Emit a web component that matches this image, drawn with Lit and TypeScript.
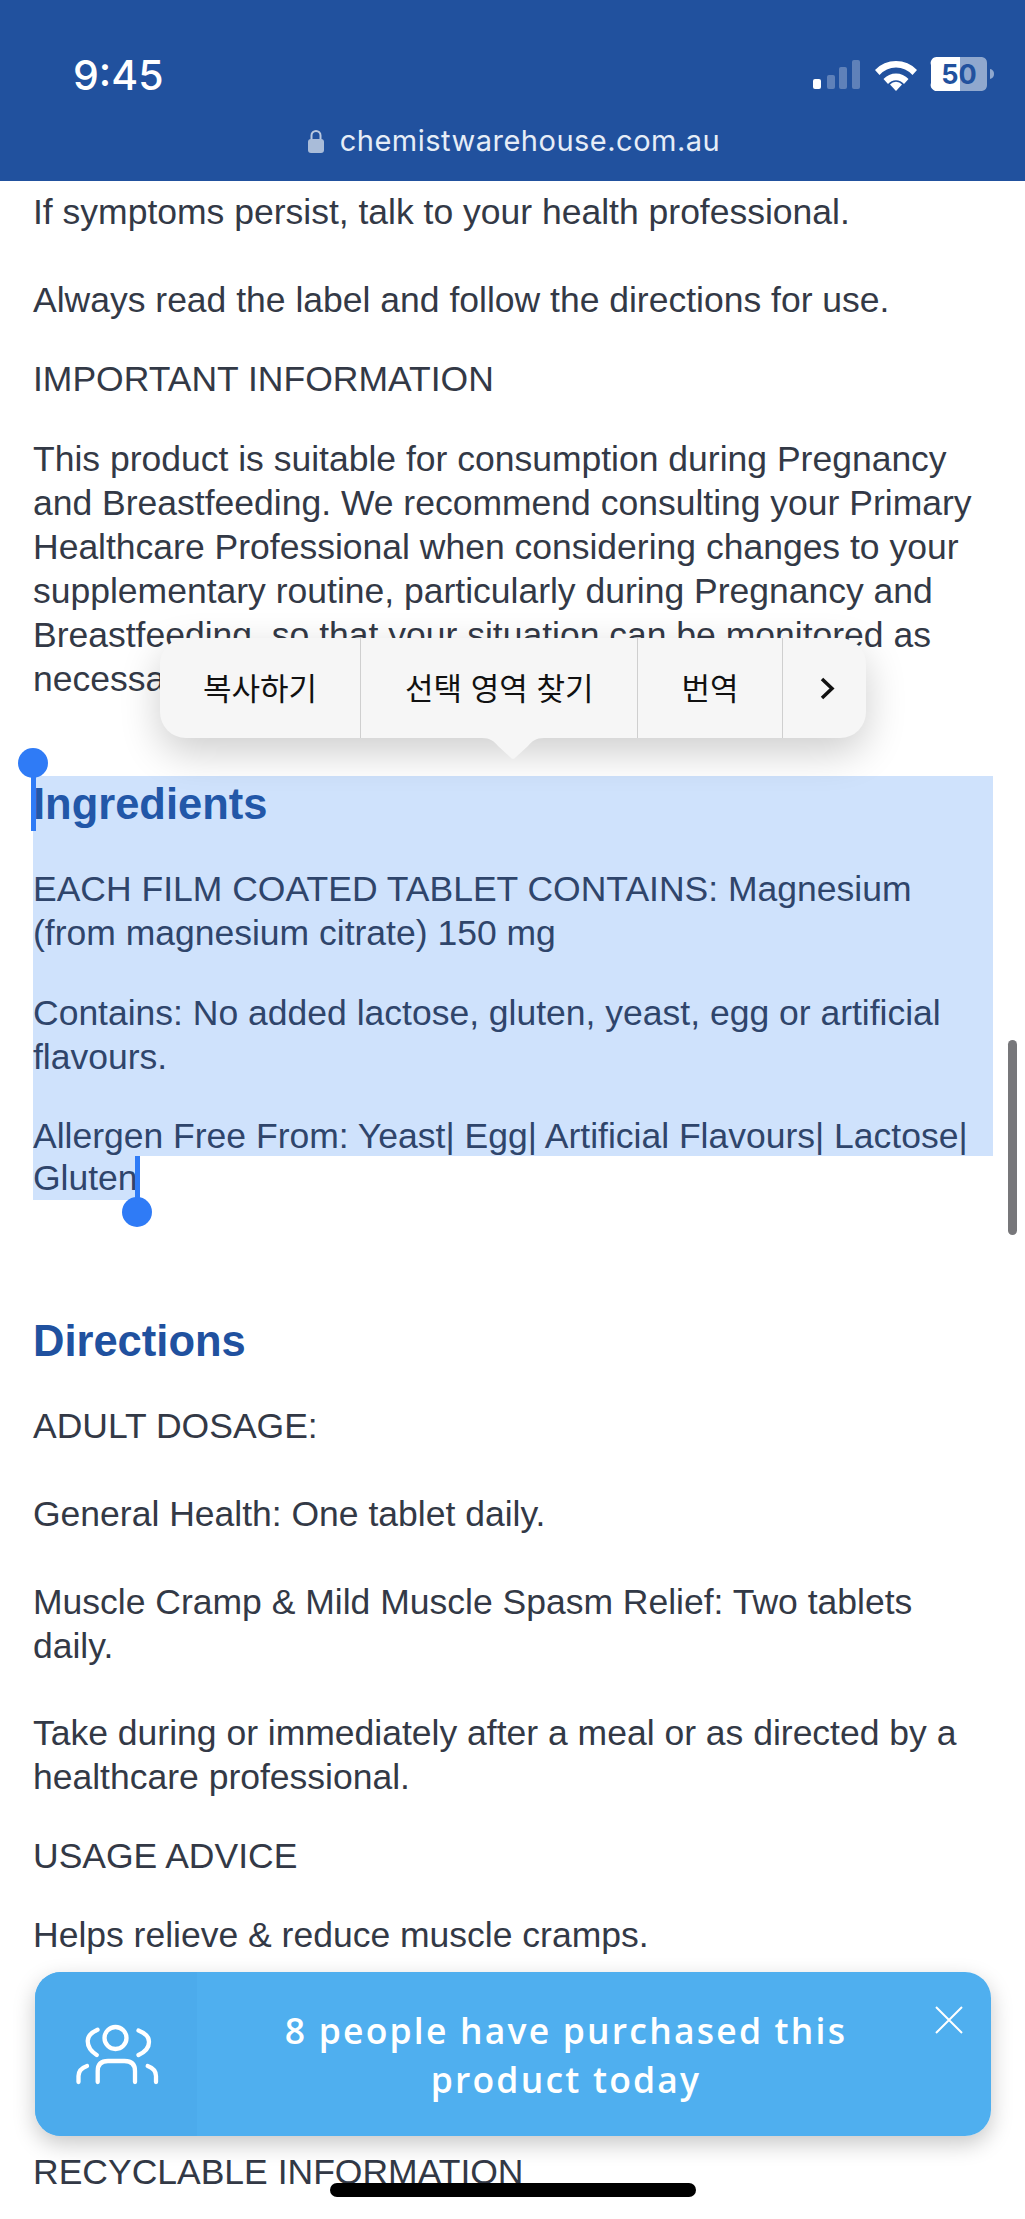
/**
 * Product page on a phone, with a text selection and a purchase toast
 */

import { LitElement, css, html, svg } from "lit";
import { customElement } from "lit/decorators.js";

const peopleIcon = svg`
	<circle cx="54.500" cy="29" r="11" />
	<path d="M36.500 20.700C29 24 26.700 28 26.700 32c0 6 4.300 11 9 14" />
	<path d="M77.500 21.500C84 24 88 28 88 33c0 6-4 10-10.500 13" />
	<path d="M36.700 73V62q0-10 10.300-10h16.500Q74 52 74 62v11" />
	<path d="M17.500 73v-6q0-7 8.500-10" />
	<path d="M95 73v-6q0-7-8.300-10" />
`;

@customElement("app-root")
export class AppRoot extends LitElement {
	static styles = css`
		:host {
			display: block;
			position: relative;
			width: 1025px;
			height: 2219px;
			overflow: hidden;
			background: #fff;
			font-family: "Liberation Sans", Arial, sans-serif;
			color: #333946;
		}

		.topbar {
			height: 181px;
			box-sizing: border-box;
			background: #21519e;
			color: #fff;
			padding: 54px 30px 0 73px;
		}

		.status {
			display: flex;
			align-items: center;
			justify-content: space-between;
			height: 42px;
		}

		.time {
			font-family: Inter, sans-serif;
			font-size: 41px;
			font-weight: 500;
			line-height: 42px;
		}

		.status-icons {
			display: block;
		}

		.url {
			display: flex;
			align-items: center;
			justify-content: center;
			gap: 16px;
			margin: 25px 0 0 -40px;
			font-family: Inter, sans-serif;
			font-size: 29px;
			line-height: 40px;
			letter-spacing: 0.5px;
			color: #e6edf7;
		}

		main {
			padding: 9px 33px 0;
			font-size: 35.5px;
			line-height: 44px;
		}

		p {
			margin: 0;
		}

		.gap {
			margin-top: 35px;
		}

		.gap-lg {
			margin-top: 36px;
		}

		.line-gap {
			margin-top: 44px;
		}

		h2 {
			margin: 0;
			font-size: 43.5px;
			line-height: 56px;
			font-weight: 700;
			color: #20519f;
		}

		.selected {
			margin-top: 75px;
			margin-right: -1px;
			background: #cfe2fc;
			color: #2f456b;
			height: 380px;
		}

		.selected h2 {
			color: #2257a8;
		}

		.last-line {
			width: fit-content;
			background: #cfe2fc;
			color: #2f456b;
			padding-right: 2px;
		}

		.directions {
			margin-top: 113px;
		}

		.take {
			margin-top: 43px;
		}

		.helps {
			margin-top: 35px;
		}

		.recyclable {
			margin-top: 193px;
		}

		.menu {
			position: absolute;
			left: 160px;
			top: 638px;
			display: flex;
			height: 100px;
			border-radius: 26px;
			background: #f6f6f6;
			box-shadow: 0 14px 40px rgba(0, 0, 0, 0.2);
			font-family: "Liberation Sans", "Noto Sans CJK KR", sans-serif;
			font-size: 31px;
			color: #111;
		}

		.menu span {
			display: flex;
			align-items: center;
			padding: 0 43px 3px;
			white-space: nowrap;
			border-left: 1px solid #cfcfcf;
		}

		.menu span:first-child {
			border-left: none;
		}

		.menu span.wide {
			padding: 0 44px 3px;
		}

		.menu span.more {
			padding: 0 30px 0 36px;
		}

		.menu-tip {
			position: absolute;
			left: 322px;
			top: 100px;
			display: block;
		}

		.handle {
			position: absolute;
			background: #2f7bf6;
		}

		.handle-dot {
			width: 30px;
			height: 30px;
			border-radius: 50%;
		}

		.toast {
			position: absolute;
			left: 35px;
			top: 1972px;
			width: 956px;
			height: 164px;
			display: flex;
			border-radius: 26px;
			overflow: hidden;
			background: #4fafef;
			color: #fff;
		}

		.toast-shadow {
			position: absolute;
			left: 35px;
			top: 1972px;
			width: 956px;
			height: 164px;
			border-radius: 26px;
			box-shadow: 0 8px 22px rgba(0, 0, 0, 0.22);
		}

		.toast-icon {
			flex: 0 0 162px;
			display: flex;
			align-items: center;
			justify-content: center;
			background: #4cabec;
		}

		.toast-icon svg {
			fill: none;
			stroke: #fff;
			stroke-width: 4.3;
			stroke-linecap: round;
		}

		.toast-text {
			flex: 1;
			padding: 34px 56px 0 0;
			font-family: "Open Sans", sans-serif;
			font-size: 35.5px;
			line-height: 49px;
			letter-spacing: 2.2px;
			font-weight: 600;
			text-align: center;
		}

		.toast-close {
			position: absolute;
			right: 28px;
			top: 34px;
			display: block;
		}

		.scrollbar {
			position: absolute;
			left: 1008px;
			top: 1040px;
			width: 9px;
			height: 195px;
			border-radius: 5px;
			background: #77777a;
		}

		.home {
			position: absolute;
			left: 330px;
			top: 2183px;
			width: 366px;
			height: 14px;
			border-radius: 7px;
			background: #000;
		}
	`;

	render() {
		return html`
			<div class="topbar">
				<div class="status">
					<span class="time">9:45</span>
					<svg class="status-icons" width="182" height="36" viewBox="0 0 182 36">
						<g fill="#fff">
							<rect x="0" y="22" width="8" height="10" rx="2" />
							<g opacity="0.28">
								<rect x="14" y="18" width="8" height="14" rx="2" />
								<rect x="26" y="10" width="8" height="22" rx="2" />
								<rect x="39" y="3" width="8" height="29" rx="2" />
							</g>
							<path d="M62 13a29 29 0 0 1 42 0l-4.500 5a22 22 0 0 0-33 0z" />
							<path d="M70.500 22a17 17 0 0 1 25 0l-4.500 5a10.500 10.500 0 0 0-16 0z" />
							<path d="M77 29.500a8 8 0 0 1 12 0L83 36z" transform="translate(0 -2)" />
							<path d="M124 0h23v34h-23a6 6 0 0 1-6-8V8a6 6 0 0 1 6-8z" />
							<g opacity="0.5">
								<path d="M146 0h23a6 6 0 0 1 5 6v22a6 6 0 0 1-5 6h-23z" />
								<path d="M177 12a5 5 0 0 1 4 5 5 5 0 0 1-4 5z" />
							</g>
						</g>
						<text
							x="146"
							y="27"
							text-anchor="middle"
							font-family="Inter, sans-serif"
							font-size="27"
							font-weight="700"
							fill="#21519e"
						>
							50
						</text>
					</svg>
				</div>
				<div class="url">
					<svg width="16" height="24" viewBox="0 0 16 24">
						<path d="M3.500 11V6.500a4.500 4.500 0 0 1 9 0V11" fill="none" stroke="#b9c8e0" stroke-width="2" />
						<rect x="0" y="10" width="16" height="14" rx="3" fill="#a9bcd9" />
					</svg>
					<span>chemistwarehouse.com.au</span>
				</div>
			</div>

			<main>
				<p>If symptoms persist, talk to your health professional.</p>
				<p class="line-gap">Always read the label and follow the directions for use.</p>
				<p class="gap">IMPORTANT INFORMATION</p>
				<p class="gap-lg">
					This product is suitable for consumption during Pregnancy and Breastfeeding. We
					recommend consulting your Primary Healthcare Professional when considering changes to
					your supplementary routine, particularly during Pregnancy and Breastfeeding, so that
					your situation can be monitored as necessary.
				</p>

				<div class="selected">
					<h2>Ingredients</h2>
					<p class="gap">
						EACH FILM COATED TABLET CONTAINS: Magnesium (from magnesium citrate) 150 mg
					</p>
					<p class="gap-lg">Contains: No added lactose, gluten, yeast, egg or artificial flavours.</p>
					<p class="gap">Allergen Free From: Yeast| Egg| Artificial Flavours| Lactose|</p>
				</div>
				<div class="last-line">Gluten</div>

				<h2 class="directions">Directions</h2>
				<p class="gap">ADULT DOSAGE:</p>
				<p class="line-gap">General Health: One tablet daily.</p>
				<p class="line-gap">Muscle Cramp &amp; Mild Muscle Spasm Relief: Two tablets daily.</p>
				<p class="take">
					Take during or immediately after a meal or as directed by a healthcare professional.
				</p>
				<p class="gap">USAGE ADVICE</p>
				<p class="helps">Helps relieve &amp; reduce muscle cramps.</p>
				<p class="recyclable">RECYCLABLE INFORMATION</p>
			</main>

			<div class="menu">
				<span>복사하기</span>
				<span class="wide">선택 영역 찾기</span>
				<span>번역</span>
				<span class="more">
					<svg width="17" height="23" viewBox="0 0 17 23">
						<path d="M3 2l10 9.500L3 21" fill="none" stroke="#111" stroke-width="3.500" />
					</svg>
				</span>
				<svg class="menu-tip" width="62" height="21" viewBox="0 0 62 21">
					<path d="M0 0h62c-8 0-12 3-16 8L34 19c-2 2.500-4 2.500-6 0L16 8C12 3 8 0 0 0z" fill="#f6f6f6" />
				</svg>
			</div>

			<div class="handle handle-dot" style="left:18px;top:748px"></div>
			<div class="handle" style="left:31px;top:776px;width:5px;height:55px"></div>
			<div class="handle" style="left:135px;top:1156px;width:5px;height:42px"></div>
			<div class="handle handle-dot" style="left:122px;top:1197px"></div>

			<div class="scrollbar"></div>

			<div class="toast-shadow"></div>
			<div class="toast">
				<div class="toast-icon">
					<svg width="110" height="90" viewBox="0 0 110 90">${peopleIcon}</svg>
				</div>
				<div class="toast-text">8 people have purchased this<br />product today</div>
				<svg class="toast-close" width="28" height="28" viewBox="0 0 28 28">
					<path d="M1 1l26 26M27 1L1 27" stroke="#fff" stroke-width="2" fill="none" />
				</svg>
			</div>

			<div class="home"></div>
		`;
	}
}
